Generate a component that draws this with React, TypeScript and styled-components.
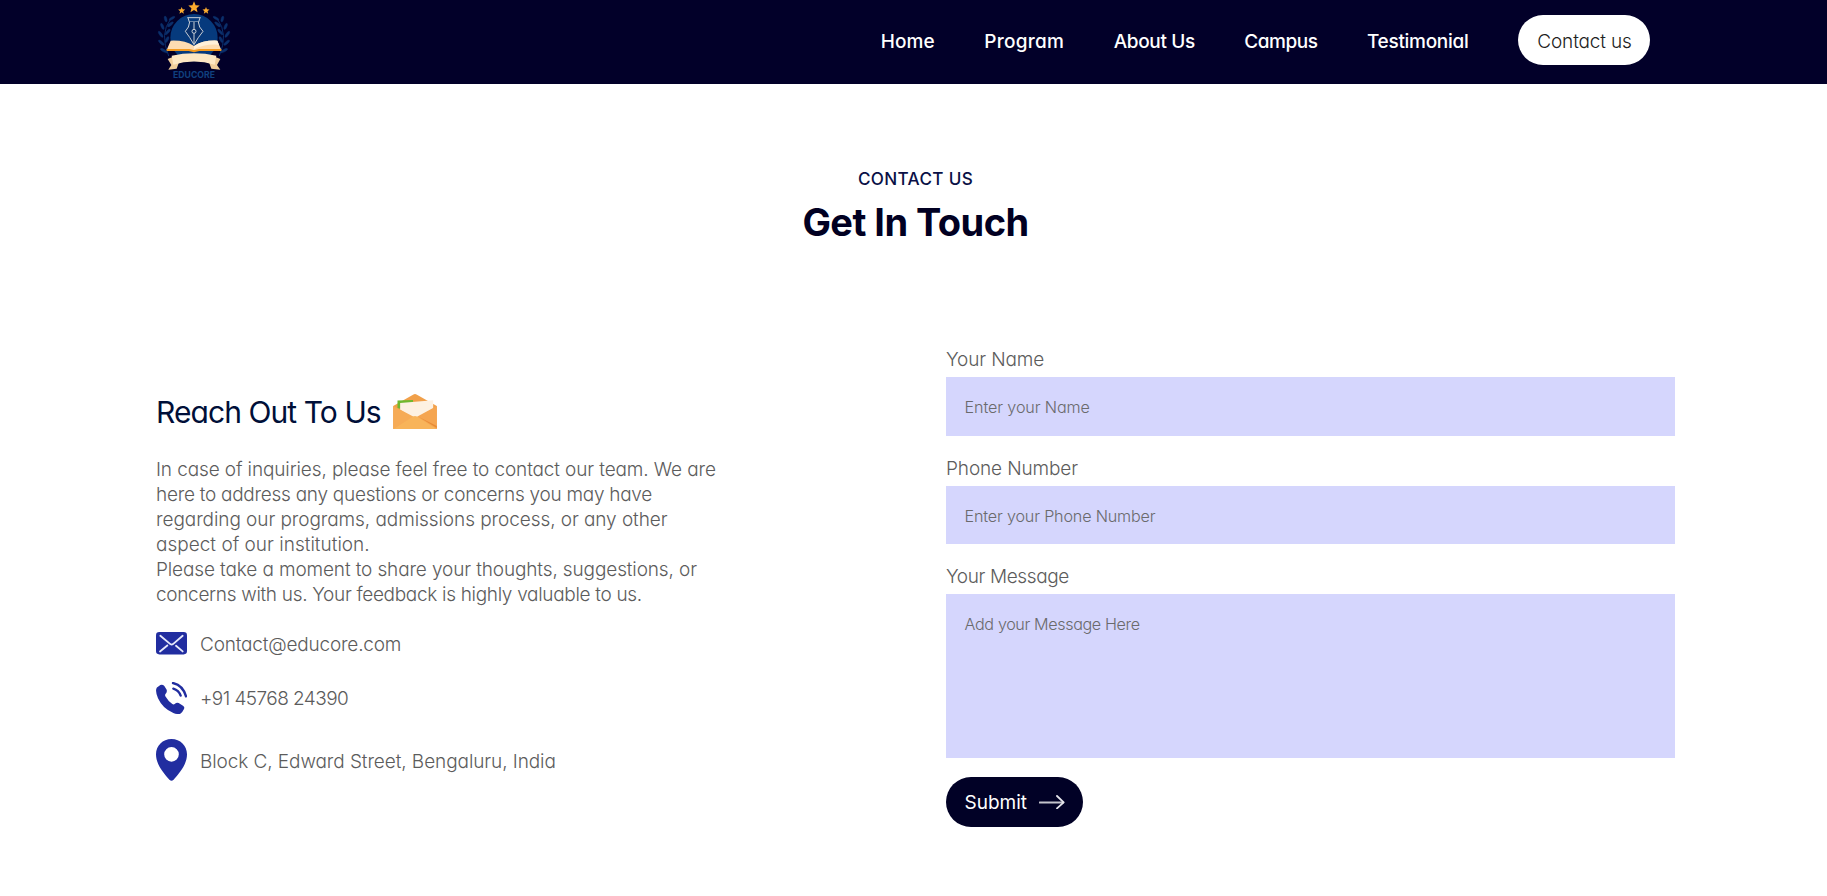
import React from "react";
import styled, { createGlobalStyle } from "styled-components";

const GlobalStyle = createGlobalStyle`
  * { box-sizing: border-box; }
  body {
    margin: 0;
    background: #fff;
    color: #5c5c5c;
    font-family: Inter, Lato, sans-serif;
    font-feature-settings: "cv11";
    font-weight: 300;
    font-size: 19px;
    line-height: 25px;
  }
`;

/* ---------- header ---------- */

const Header = styled.header`
  display: flex;
  align-items: center;
  justify-content: space-between;
  height: 84px;
  padding: 0 177px 0 150px;
  background: #020029;
`;

const LogoArt = styled.svg`
  display: block;
  width: 86px;
  height: 82px;
  margin-bottom: 2px;
`;

const Nav = styled.nav`
  display: flex;
  align-items: center;
  gap: 49.5px;
  padding-bottom: 4px;
`;

const NavLink = styled.a<{ $tracking: number }>`
  padding-top: 2px;
  color: #fff;
  font-weight: 500;
  white-space: nowrap;
  letter-spacing: ${(p) => p.$tracking}px;
`;

const ContactButton = styled.a`
  display: flex;
  align-items: center;
  justify-content: center;
  width: 132px;
  height: 50px;
  padding: 2px 0 0 1px;
  border-radius: 25px;
  background: #fff;
  color: #212121;
  letter-spacing: -0.15px;
`;

/* ---------- section title ---------- */

const TitleBlock = styled.section`
  padding-top: 83px;
  text-align: center;
`;

const Eyebrow = styled.p`
  margin: 0 0 7px;
  padding-left: 4px;
  color: #0a1046;
  font-size: 17.1px;
  font-weight: 500;
  line-height: 23px;
  letter-spacing: 0.34px;
`;

const Title = styled.h2`
  margin: 0;
  padding-left: 4px;
  color: #010022;
  font-size: 38px;
  font-weight: 700;
  line-height: 50px;
  letter-spacing: -0.55px;
`;

/* ---------- content ---------- */

const Content = styled.main`
  display: grid;
  grid-template-columns: 790px 729px;
  padding: 100px 0 69px 156px;
`;

const Info = styled.div`
  padding-top: 46px;
`;

const InfoHeading = styled.h3`
  display: flex;
  align-items: center;
  gap: 12px;
  margin: 0 0 26px;
  color: #000f38;
  font-size: 30px;
  font-weight: 400;
  line-height: 38px;
  letter-spacing: -0.92px;
`;

const Paragraph = styled.p`
  margin: 0;
`;

const Line = styled.span<{ $tracking: number }>`
  display: block;
  white-space: nowrap;
  letter-spacing: ${(p) => p.$tracking}px;
`;

const ContactList = styled.ul`
  display: flex;
  flex-direction: column;
  gap: 24.5px;
  margin: 25px 0 0;
  padding: 0;
  list-style: none;
`;

const ContactItem = styled.li<{ $drop?: number }>`
  display: flex;
  align-items: center;
  gap: 13px;
  ${Line} { padding-top: ${(p) => p.$drop ?? 0}px; }
`;

const Glyph = styled.svg<{ $lift?: number }>`
  display: block;
  flex: none;
  margin-bottom: ${(p) => p.$lift ?? 0}px;
`;

/* ---------- form ---------- */

const Form = styled.form`
  display: flex;
  flex-direction: column;
  align-items: flex-start;
`;

const Label = styled.label<{ $tracking: number }>`
  margin-bottom: 5px;
  letter-spacing: ${(p) => p.$tracking}px;
`;

const Input = styled.input<{ $height: number; $tracking: number; $top: number }>`
  display: block;
  width: 100%;
  height: ${(p) => p.$height}px;
  margin: 0 0 20px;
  padding: ${(p) => p.$top}px 18px 0 18.6px;
  border: 0;
  border-radius: 0;
  outline: none;
  background: #d5d6fd;
  font: inherit;
  font-feature-settings: inherit;
  font-size: 16.15px;
  letter-spacing: ${(p) => p.$tracking}px;
  &::placeholder { color: #6a6a6c; opacity: 1; }
`;

const TextArea = styled.textarea`
  display: block;
  width: 100%;
  height: 164px;
  margin: 0 0 19px;
  padding: 20px 18.6px;
  border: 0;
  outline: none;
  resize: none;
  background: #d5d6fd;
  font: inherit;
  font-feature-settings: inherit;
  font-size: 16.15px;
  line-height: 20px;
  letter-spacing: -0.37px;
  &::placeholder { color: #6a6a6c; opacity: 1; }
`;

const Submit = styled.button`
  display: flex;
  align-items: center;
  justify-content: space-between;
  width: 137px;
  height: 50px;
  margin: 0;
  padding: 0 18.5px 0 18.5px;
  border: 0;
  border-radius: 25px;
  background: #010126;
  color: #fff;
  font: inherit;
  font-feature-settings: inherit;
  font-weight: 400;
`;

/* ---------- drawings ---------- */

const star = (cx: number, cy: number, r: number) =>
  Array.from({ length: 10 }, (_, i) => {
    const a = (Math.PI / 5) * i - Math.PI / 2;
    const d = i % 2 ? r * 0.45 : r;
    return `${(cx + d * Math.cos(a)).toFixed(1)},${(cy + d * Math.sin(a)).toFixed(1)}`;
  }).join(" ");

const Laurel = () => (
  <g fill="#0b2f6b" stroke="#0b2f6b" transform="translate(6 0)">
    <path d="M56 57 Q22 100 50 168" fill="none" strokeWidth="3" />
    <ellipse cx="60" cy="55" rx="10" ry="3.5" transform="rotate(-32 60 55)" />
    <ellipse cx="41" cy="57" rx="9" ry="4" transform="rotate(75 41 57)" />
    <ellipse cx="55" cy="73" rx="11" ry="4" transform="rotate(-38 55 73)" />
    <ellipse cx="31" cy="79" rx="10" ry="4" transform="rotate(68 31 79)" />
    <ellipse cx="47" cy="96" rx="11" ry="4" transform="rotate(-50 47 96)" />
    <ellipse cx="26" cy="103" rx="11" ry="4" transform="rotate(55 26 103)" />
    <ellipse cx="45" cy="119" rx="10" ry="4" transform="rotate(-62 45 119)" />
    <ellipse cx="28" cy="128" rx="11" ry="4" transform="rotate(42 28 128)" />
    <ellipse cx="36" cy="152" rx="12" ry="4" transform="rotate(28 36 152)" />
  </g>
);

const Logo = () => (
  <LogoArt viewBox="0 0 258 246" aria-label="Educore">
    <Laurel />
    <g transform="translate(264 0) scale(-1 1)"><Laurel /></g>
    <circle cx="132" cy="113" r="71" fill="#063a7d" />
    <g fill="#fbab2e">
      <polygon points={star(132, 22, 18)} />
      <polygon points={star(95, 32, 11)} />
      <polygon points={star(168, 32, 11)} />
    </g>
    <g fill="none" stroke="#c9cfd6" strokeWidth="3">
      <path d="M112 53 H152 M114 53 L118 66 H146 L150 53" />
      <path d="M119 66 Q118 82 106 94 Q120 112 132 134 Q144 112 159 94 Q146 82 145 66" fill="#08306b" />
      <path d="M132 66 V88" />
      <circle cx="132" cy="94" r="6" />
      <path d="M132 100 V132" />
    </g>
    <path d="M50 150 L62 122 Q104 120 132 138 Q160 120 202 122 L214 150Z" fill="#fddcb2" />
    <path d="M132 138 Q160 120 202 122 L207 134 Q165 130 132 148Z" fill="#fff0d9" />
    <path d="M50 147 H118 L132 150 L147 147 H214 V153 H148 L132 157 L116 153 H50Z" fill="#f39a1f" />
    <path d="M53 177 L68 171 L88 184 L80 206 L55 209 L64 195Z" fill="#f0cd9a" />
    <path d="M211 177 L196 171 L176 184 L184 206 L211 209 L201 195Z" fill="#f0cd9a" />
    <path d="M65 167 Q132 153 199 167 L194 194 Q132 175 70 194Z" fill="#fde7c3" />
    <text
      x="69" y="234" textLength="126" lengthAdjust="spacingAndGlyphs"
      fontFamily="Inter, sans-serif" fontWeight="700" fontSize="27" fill="#10407f"
    >EDUCORE</text>
  </LogoArt>
);

const Envelope = () => (
  <Glyph width="44" height="35" viewBox="0 0 132 106" $lift={2}>
    <path d="M0 36 L60 2 Q66 -2 72 2 L132 36 V106 H0Z" fill="#f1a04a" />
    <path d="M13 20 L60 18 L60 50 L13 43Z" fill="#6fb92f" />
    <path d="M21 27 L121 19 V44 L66 76 L21 48Z" fill="#fdf1e2" />
    <path d="M0 36 L62 69 L0 106Z" fill="#f6ab56" />
    <path d="M132 36 L72 69 L132 106Z" fill="#f5a550" />
    <path d="M0 106 L60 68 Q66 65 72 68 L132 106Z" fill="#f8b45a" />
    <path d="M78 70 L132 97 V103Z" fill="#e88b35" />
  </Glyph>
);

const MailIcon = () => (
  <Glyph width="31" height="22.5" viewBox="0 0 93 67" $lift={2}>
    <rect width="93" height="67" rx="10" fill="#212da0" />
    <path
      d="M13 11 L43 36 Q47 39 51 36 L80 11 M12 58 L34 40 M60 41 L80 58"
      fill="none" stroke="#e6e8fa" strokeWidth="5.5" strokeLinecap="round"
    />
  </Glyph>
);

const PhoneIcon = () => (
  <Glyph width="31" height="32" viewBox="0 0 93 96" $lift={1}>
    <path
      d="M6 14 L13 9 Q20 7 25 12 L32 23 Q34 30 29 35 Q26 38 28 43 Q36 57 49 66 Q53 69 57 65 Q62 60 68 63 L81 71 Q87 75 84 81 Q80 90 73 95 Q64 98 52 93 Q20 80 6 49 Q-2 30 1 20 Q2 16 6 14Z"
      fill="#212da0"
    />
    <path
      d="M51 3 Q81 10 90 43 M52 20 Q68 25 74 41"
      fill="none" stroke="#212da0" strokeWidth="7" strokeLinecap="round"
    />
  </Glyph>
);

const PinIcon = () => (
  <Glyph width="31" height="42" viewBox="0 0 93 126">
    <path
      fillRule="evenodd" fill="#212da0"
      d="M46.5 0 C20 0 0 20 0 46 C0 76 22 102 41 123 Q46.500 128 52 123 C71 102 93 76 93 46 C93 20 73 0 46.500 0Z M46.500 24 a22 22 0 1 1 0 44 a22 22 0 1 1 0 -44Z"
    />
  </Glyph>
);

const ArrowIcon = () => (
  <Glyph width="26" height="14" viewBox="0 0 78 42">
    <path d="M2 22.500 H72" stroke="#c3c3cc" strokeWidth="6" strokeLinecap="round" />
    <path d="M54 3 L74 22 L54 40" fill="none" stroke="#e4e4ea" strokeWidth="5.5" strokeLinecap="round" strokeLinejoin="round" />
  </Glyph>
);

/* ---------- page data ---------- */

const links = [
  { text: "Home", tracking: 0.05 },
  { text: "Program", tracking: 0.28 },
  { text: "About Us", tracking: -0.36 },
  { text: "Campus", tracking: -0.48 },
  { text: "Testimonial", tracking: -0.28 },
];

const lines = [
  { text: "In case of inquiries, please feel free to contact our team. We are", tracking: -0.12 },
  { text: "here to address any questions or concerns you may have", tracking: -0.27 },
  { text: "regarding our programs, admissions process, or any other", tracking: -0.07 },
  { text: "aspect of our institution.", tracking: 0.01 },
  { text: "Please take a moment to share your thoughts, suggestions, or", tracking: -0.125 },
  { text: "concerns with us. Your feedback is highly valuable to us.", tracking: -0.315 },
];

const contacts = [
  { icon: <MailIcon />, text: "Contact@educore.com", tracking: -0.19, drop: 0 },
  { icon: <PhoneIcon />, text: "+91 45768 24390", tracking: -0.56, drop: 0 },
  { icon: <PinIcon />, text: "Block C, Edward Street, Bengaluru, India", tracking: -0.08, drop: 2 },
];

export default function App() {
  return (
    <>
      <GlobalStyle />
      <Header>
        <Logo />
        <Nav>
          {links.map((l) => (
            <NavLink key={l.text} $tracking={l.tracking}>{l.text}</NavLink>
          ))}
          <ContactButton>Contact us</ContactButton>
        </Nav>
      </Header>

      <TitleBlock>
        <Eyebrow>CONTACT US</Eyebrow>
        <Title>Get In Touch</Title>
      </TitleBlock>

      <Content>
        <Info>
          <InfoHeading>
            Reach Out To Us
            <Envelope />
          </InfoHeading>
          <Paragraph>
            {lines.map((l) => (
              <Line key={l.text} $tracking={l.tracking}>{l.text}</Line>
            ))}
          </Paragraph>
          <ContactList>
            {contacts.map((c) => (
              <ContactItem key={c.text} $drop={c.drop}>
                {c.icon}
                <Line $tracking={c.tracking}>{c.text}</Line>
              </ContactItem>
            ))}
          </ContactList>
        </Info>

        <Form>
          <Label $tracking={-0.12}>Your Name</Label>
          <Input $height={59} $tracking={-0.12} $top={0} placeholder="Enter your Name" />
          <Label $tracking={-0.12}>Phone Number</Label>
          <Input $height={58} $tracking={-0.18} $top={2} placeholder="Enter your Phone Number" />
          <Label $tracking={-0.38}>Your Message</Label>
          <TextArea placeholder="Add your Message Here" />
          <Submit type="button">
            Submit
            <ArrowIcon />
          </Submit>
        </Form>
      </Content>
    </>
  );
}
